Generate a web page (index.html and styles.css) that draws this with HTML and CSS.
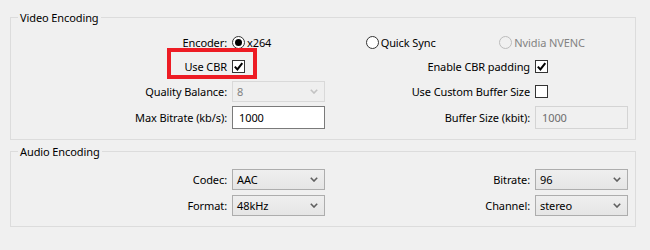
FILE: index.html
```html
<!DOCTYPE html>
<html lang="en">
<head>
    <meta charset="UTF-8">
    <title>Output Settings</title>
    <link rel="stylesheet" href="styles.css">
</head>
<body>
    <fieldset class="group video">
        <legend>Video Encoding</legend>
        <div class="grid">
            <div class="lbl">Encoder:</div>
            <div class="radios">
                <span class="radio on"><i></i>x264</span>
                <span class="radio"><i></i>Quick Sync</span>
                <span class="radio disabled"><i></i>Nvidia NVENC</span>
            </div>

            <div class="lbl">Use CBR</div>
            <div class="cell"><span class="check on">
                <svg width="11" height="11" viewBox="0 0 11 11"><path d="M1.8 5.6 L4.4 8.4 L9.3 2.2" /></svg>
            </span></div>
            <div class="lbl">Enable CBR padding</div>
            <div class="cell"><span class="check on">
                <svg width="11" height="11" viewBox="0 0 11 11"><path d="M1.8 5.6 L4.4 8.4 L9.3 2.2" /></svg>
            </span></div>

            <div class="lbl">Quality Balance:</div>
            <div class="cell"><div class="combo disabled"><span>8</span>
                <svg width="8" height="5" viewBox="0 0 8 5"><polyline points="0.8,0.8 4,4 7.2,0.8" /></svg>
            </div></div>
            <div class="lbl">Use Custom Buffer Size</div>
            <div class="cell"><span class="check"></span></div>

            <div class="lbl">Max Bitrate (kb/s):</div>
            <div class="cell"><div class="field">1000</div></div>
            <div class="lbl">Buffer Size (kbit):</div>
            <div class="cell"><div class="field disabled">1000</div></div>

            <div class="highlight"></div>
        </div>
    </fieldset>

    <fieldset class="group audio">
        <legend>Audio Encoding</legend>
        <div class="grid">
            <div class="lbl">Codec:</div>
            <div class="cell"><div class="combo"><span>AAC</span>
                <svg width="8" height="5" viewBox="0 0 8 5"><polyline points="0.8,0.8 4,4 7.2,0.8" /></svg>
            </div></div>
            <div class="lbl">Bitrate:</div>
            <div class="cell"><div class="combo"><span>96</span>
                <svg width="8" height="5" viewBox="0 0 8 5"><polyline points="0.8,0.8 4,4 7.2,0.8" /></svg>
            </div></div>

            <div class="lbl">Format:</div>
            <div class="cell"><div class="combo"><span>48kHz</span>
                <svg width="8" height="5" viewBox="0 0 8 5"><polyline points="0.8,0.8 4,4 7.2,0.8" /></svg>
            </div></div>
            <div class="lbl">Channel:</div>
            <div class="cell"><div class="combo"><span>stereo</span>
                <svg width="8" height="5" viewBox="0 0 8 5"><polyline points="0.8,0.8 4,4 7.2,0.8" /></svg>
            </div></div>
        </div>
    </fieldset>
</body>
</html>
```

FILE: styles.css
```css
body {
    margin: 0;
    padding-top: 10px;
    background: #f0f0f0;
    font-family: "Noto Sans", sans-serif;
    font-size: 11px;
    letter-spacing: -0.1px;
    color: #000;
}

.group {
    width: 624px;
    margin: 0 0 0 10px;
    padding: 0;
    border: 1px solid #dcdcdc;
}

.group legend {
    margin-left: 7px;
    padding: 0 2px;
    line-height: 15px;
}

.audio {
    margin-top: 4px;
}

.grid {
    position: relative;
    display: grid;
    grid-template-columns: 216px 93px 200px 93px;
    column-gap: 5px;
    align-items: center;
}

.video .grid {
    grid-template-rows: 24px 24px 26px 26px;
    padding: 5px 0 9px;
}

.audio .grid {
    grid-template-rows: 26px 26px;
    padding: 7px 0 8px;
}

.lbl {
    text-align: right;
    white-space: nowrap;
}

.cell {
    display: flex;
    align-items: center;
}

/* radio buttons */
.radios {
    grid-column: 2 / 5;
    display: grid;
    grid-template-columns: repeat(3, 1fr);
    margin-right: -5px;
}

.radio {
    display: flex;
    align-items: center;
    gap: 2px;
}

.radio i {
    width: 11px;
    height: 11px;
    border: 1px solid #333;
    border-radius: 50%;
    background: #fff;
    display: flex;
    align-items: center;
    justify-content: center;
}

.radio.on i::after {
    content: "";
    width: 7px;
    height: 7px;
    border-radius: 50%;
    background: #000;
}

.radio.disabled {
    color: #838383;
}

.radio.disabled i {
    border-color: #bcbcbc;
    background: #f0f0f0;
}

/* checkboxes */
.check {
    width: 11px;
    height: 11px;
    border: 1px solid #333;
    background: #fff;
    display: flex;
}

.check svg path {
    fill: none;
    stroke: #000;
    stroke-width: 2;
}

/* combo boxes */
.combo {
    box-sizing: border-box;
    width: 93px;
    height: 21px;
    border: 1px solid #adadad;
    background: linear-gradient(#efefef, #e5e5e5);
    display: flex;
    align-items: center;
    justify-content: space-between;
    padding: 0 6px 0 4px;
}

.combo svg polyline {
    fill: none;
    stroke: #5f5f5f;
    stroke-width: 1.6;
}

.combo.disabled {
    border-color: #d9d9d9;
    background: #efefef;
    color: #838383;
}

.combo.disabled svg polyline {
    stroke: #c2c2c2;
}

/* text fields */
.field {
    box-sizing: border-box;
    width: 93px;
    height: 23px;
    border: 1px solid #7a7a7a;
    background: #fff;
    padding: 3px 0 0 6px;
}

.field.disabled {
    border-color: #d4d4d4;
    background: #f0f0f0;
    color: #6d6d6d;
}

/* annotation box around the CBR option */
.highlight {
    position: absolute;
    left: 156px;
    top: 23px;
    width: 82px;
    height: 23px;
    border: 4px solid #ed1c24;
}
```
